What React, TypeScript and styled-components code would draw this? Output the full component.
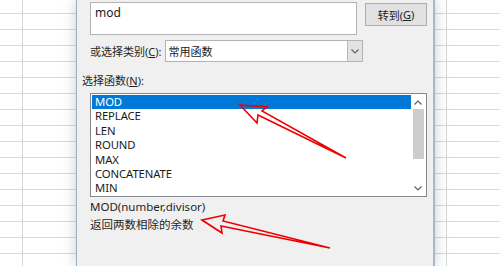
import React from 'react';
import styled, { createGlobalStyle } from 'styled-components';

const GlobalStyle = createGlobalStyle`
  html, body {
    margin: 0;
    padding: 0;
    background: #ffffff;
  }
  body {
    font-family: "Noto Sans", "Noto Sans CJK SC", sans-serif;
  }
`;

const Page = styled.div`
  position: relative;
  display: flex;
  width: 500px;
  height: 266px;
  overflow: hidden;
  background: #ffffff;
`;

const Sheet = styled.div<{ width?: number; colX: number }>`
  flex: ${(p) => (p.width ? `0 0 ${p.width}px` : '1 1 auto')};
  height: 100%;
  background-color: #ffffff;
  background-image:
    linear-gradient(to right, transparent ${(p) => p.colX}px, #d6d6d6 ${(p) => p.colX}px, #d6d6d6 ${(p) => p.colX + 1}px, transparent ${(p) => p.colX + 1}px),
    repeating-linear-gradient(to bottom, transparent 0, transparent 13px, #dadada 13px, #dadada 14px, transparent 14px, transparent 16px);
`;

const Dialog = styled.div`
  position: relative;
  z-index: 1;
  flex: 0 0 357px;
  box-sizing: border-box;
  height: 100%;
  background: #f0f0f0;
  border-left: 1px solid #9fb0c4;
  border-right: 2px solid #a8b8ca;
  box-shadow: 0 0 12px rgba(60, 70, 80, 0.28);
  padding: 2px 6px 0 5px;
  display: flex;
  flex-direction: column;
  font-size: 11px;
  color: #1a1a1a;
`;

const Row = styled.div<{ top?: number; indent?: number; height?: number }>`
  display: flex;
  align-items: center;
  margin-top: ${(p) => p.top ?? 0}px;
  padding-left: ${(p) => p.indent ?? 0}px;
  height: ${(p) => (p.height ? `${p.height}px` : 'auto')};
`;

const SearchBox = styled.div`
  box-sizing: border-box;
  width: 267px;
  height: 33px;
  background: #ffffff;
  border: 1px solid #b3b3b3;
  padding: 2px 4px;
  font-size: 12px;
  line-height: 16px;
  align-self: flex-start;
`;

const Button = styled.div`
  box-sizing: border-box;
  width: 62px;
  height: 23px;
  margin-left: 8px;
  margin-top: 1px;
  align-self: flex-start;
  background: #e1e1e1;
  border: 1px solid #adadad;
  display: flex;
  align-items: center;
  justify-content: center;
  font-size: 11px;
  color: #222;
`;

const Label = styled.span`
  white-space: nowrap;
  color: #1f1f1f;
`;

const Combo = styled.div`
  box-sizing: border-box;
  width: 198px;
  height: 22px;
  margin-left: 3px;
  background: #ffffff;
  border: 1px solid #b3b3b3;
  display: flex;
  align-items: stretch;
`;

const ComboText = styled.div`
  flex: 1;
  display: flex;
  align-items: center;
  padding-left: 3px;
`;

const ComboArrow = styled.div`
  width: 14px;
  background: #e3e3e3;
  border-left: 1px solid #b8b8b8;
  display: flex;
  align-items: center;
  justify-content: center;
`;

const ListBox = styled.div`
  box-sizing: border-box;
  width: 337px;
  height: 104px;
  background: #ffffff;
  border: 1px solid #828790;
  display: flex;
  padding: 1px;
`;

const Items = styled.div`
  flex: 1;
  display: flex;
  flex-direction: column;
`;

const Item = styled.div<{ selected?: boolean }>`
  height: 14.4px;
  line-height: 14.4px;
  padding-left: 3px;
  font-size: 11.3px;
  letter-spacing: -0.1px;
  background: ${(p) => (p.selected ? '#0078d7' : 'transparent')};
  color: ${(p) => (p.selected ? '#ffffff' : '#1a1a1a')};
`;

const ScrollBar = styled.div`
  width: 14px;
  display: flex;
  flex-direction: column;
  align-items: center;
  background: #ffffff;
`;

const ScrollBtn = styled.div`
  height: 14px;
  width: 100%;
  display: flex;
  align-items: center;
  justify-content: center;
`;

const Thumb = styled.div`
  width: 11px;
  height: 50px;
  background: #cdcdcd;
`;

const Spacer = styled.div`
  flex: 1;
`;

const Desc = styled.div<{ top: number }>`
  margin-top: ${(p) => p.top}px;
  padding-left: 8px;
  font-size: 11.5px;
  line-height: 14px;
  color: #1f1f1f;
`;

const Overlay = styled.svg`
  position: absolute;
  left: 0;
  top: 0;
  z-index: 2;
  pointer-events: none;
`;

const Chevron = ({ up }: { up?: boolean }) => (
  <svg width="8" height="5" viewBox="0 0 8 5">
    <path
      d={up ? 'M0.5 4.5 L4 1 L7.5 4.5' : 'M0.5 0.5 L4 4 L7.5 0.5'}
      fill="none"
      stroke="#606060"
      strokeWidth="1.2"
    />
  </svg>
);

const functions = ['MOD', 'REPLACE', 'LEN', 'ROUND', 'MAX', 'CONCATENATE', 'MIN'];

const App: React.FC = () => {
  return (
    <>
      <GlobalStyle />
      <Page>
        <Sheet width={76} colX={22} />
        <Dialog>
          <Row indent={8}>
            <SearchBox>mod</SearchBox>
            <Button>
              转到(<u>G</u>)
            </Button>
          </Row>
          <Row top={5} indent={8} height={22}>
            <Label>
              或选择类别(<u>C</u>):
            </Label>
            <Combo>
              <ComboText>常用函数</ComboText>
              <ComboArrow>
                <Chevron />
              </ComboArrow>
            </Combo>
          </Row>
          <Row top={10} height={16}>
            <Label>
              选择函数(<u>N</u>):
            </Label>
          </Row>
          <Row top={5} indent={8}>
            <ListBox>
              <Items>
                {functions.map((f, i) => (
                  <Item key={f} selected={i === 0}>
                    {f}
                  </Item>
                ))}
              </Items>
              <ScrollBar>
                <ScrollBtn>
                  <Chevron up />
                </ScrollBtn>
                <Thumb />
                <Spacer />
                <ScrollBtn>
                  <Chevron />
                </ScrollBtn>
              </ScrollBar>
            </ListBox>
          </Row>
          <Desc top={3}>MOD(number,divisor)</Desc>
          <Desc top={4}>返回两数相除的余数</Desc>
        </Dialog>
        <Sheet colX={11} />
        <Overlay width="500" height="266" viewBox="0 0 500 266">
          <polygon
            points="240,105 267,107 262,111 346,158 258,115 257,123"
            fill="none"
            stroke="#ee0000"
            strokeWidth="1.6"
            strokeLinejoin="miter"
          />
          <polygon
            points="202,220 225,215 223,221 330,248 221,226 222,233"
            fill="none"
            stroke="#ee0000"
            strokeWidth="1.6"
            strokeLinejoin="miter"
          />
        </Overlay>
      </Page>
    </>
  );
};

export default App;
